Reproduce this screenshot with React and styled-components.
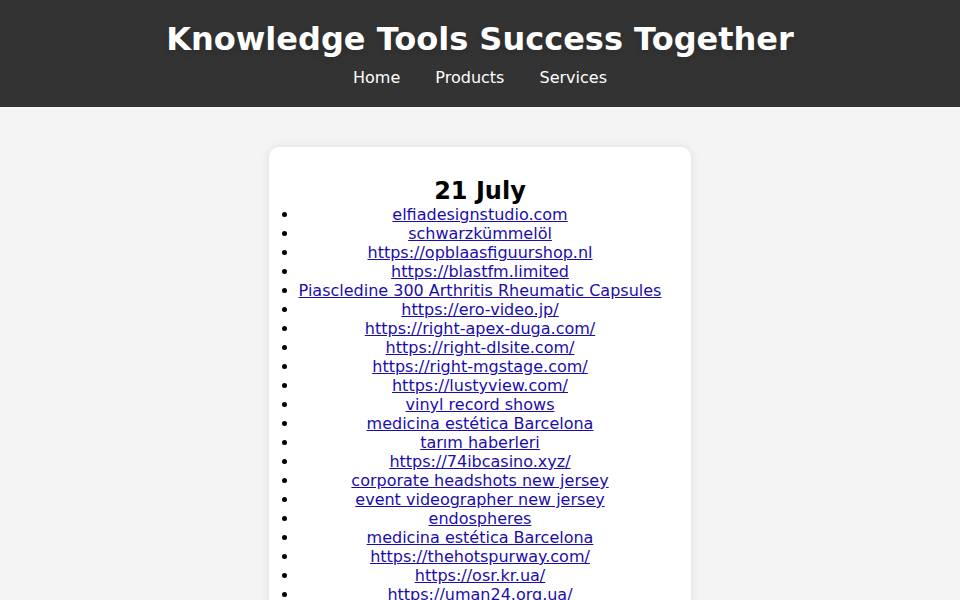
import styled, { createGlobalStyle } from 'styled-components'

const GlobalStyle = createGlobalStyle`
    body {
        margin: 0;
        background-color: #f4f4f4;
        font-family: "DejaVu Sans", Verdana, sans-serif;
        color: #000;
    }
`

const Header = styled.header`
    background-color: #333;
    color: #fff;
    padding: 20px 0;
    text-align: center;
`

const Title = styled.h1`
    margin: 0 0 10px;
    font-size: 32px;
    font-weight: bold;
    text-shadow: 0 3px 6px rgba(0, 0, 0, 0.15);
`

const Nav = styled.nav`
    font-size: 16px;
`

const NavLink = styled.a`
    color: #fff;
    text-decoration: none;
    margin: 0 15px;
`

const Card = styled.main`
    width: fit-content;
    margin: 40px auto;
    padding: 30px;
    background-color: #fff;
    border-radius: 10px;
    box-shadow: 0 0 10px rgba(0, 0, 0, 0.1);
    text-align: center;
`

const DayTitle = styled.h2`
    margin: 0;
    font-size: 24px;
`

const List = styled.ul`
    margin: 0;
    padding: 0;
    font-size: 16px;
`

const Item = styled.li`
    a {
        color: #1a0dab;
        text-decoration: underline;
    }
`

const links = [
    'elfiadesignstudio.com',
    'schwarzkümmelöl',
    'https://opblaasfiguurshop.nl',
    'https://blastfm.limited',
    'Piascledine 300 Arthritis Rheumatic Capsules',
    'https://ero-video.jp/',
    'https://right-apex-duga.com/',
    'https://right-dlsite.com/',
    'https://right-mgstage.com/',
    'https://lustyview.com/',
    'vinyl record shows',
    'medicina estética Barcelona',
    'tarım haberleri',
    'https://74ibcasino.xyz/',
    'corporate headshots new jersey',
    'event videographer new jersey',
    'endospheres',
    'medicina estética Barcelona',
    'https://thehotspurway.com/',
    'https://osr.kr.ua/',
    'https://uman24.org.ua/',
    'https://nikolaev.kr.ua/',
]

const App = () => {
    return (
        <>
            <GlobalStyle />
            <Header>
                <Title>Knowledge Tools Success Together</Title>
                <Nav>
                    <NavLink href="#">Home</NavLink> <NavLink href="#">Products</NavLink> <NavLink href="#">Services</NavLink>
                </Nav>
            </Header>
            <Card>
                <DayTitle>21 July</DayTitle>
                <List>
                    {links.map((text, i) => (
                        <Item key={i}>
                            <a href="#">{text}</a>
                        </Item>
                    ))}
                </List>
            </Card>
        </>
    )
}

export default App
